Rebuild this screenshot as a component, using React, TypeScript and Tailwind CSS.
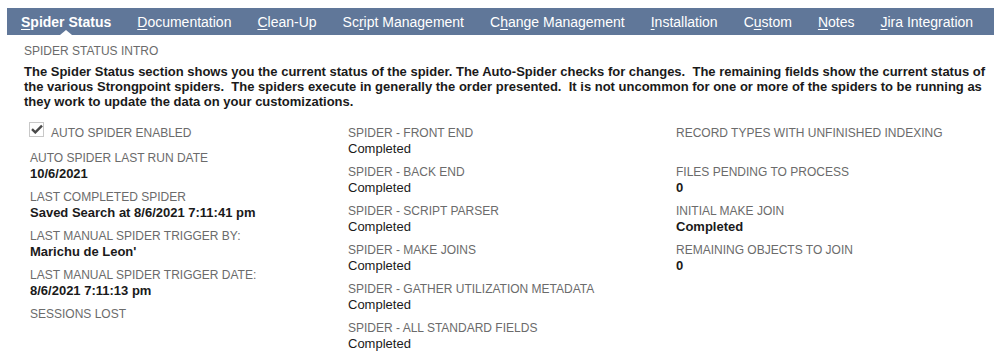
import React from 'react';

type Tab = { pre: string; key: string; post: string; active?: boolean };

const tabs: Tab[] = [
    { pre: '', key: 'S', post: 'pider Status', active: true },
    { pre: '', key: 'D', post: 'ocumentation' },
    { pre: '', key: 'C', post: 'lean-Up' },
    { pre: 'Sc', key: 'r', post: 'ipt Management' },
    { pre: 'C', key: 'h', post: 'ange Management' },
    { pre: '', key: 'I', post: 'nstallation' },
    { pre: 'C', key: 'u', post: 'stom' },
    { pre: '', key: 'N', post: 'otes' },
    { pre: '', key: 'J', post: 'ira Integration' },
];

type Field = { label: string; value?: string; bold?: boolean };

const colOne: Field[] = [
    { label: 'AUTO SPIDER LAST RUN DATE', value: '10/6/2021', bold: true },
    { label: 'LAST COMPLETED SPIDER', value: 'Saved Search at 8/6/2021 7:11:41 pm', bold: true },
    { label: 'LAST MANUAL SPIDER TRIGGER BY:', value: "Marichu de Leon'", bold: true },
    { label: 'LAST MANUAL SPIDER TRIGGER DATE:', value: '8/6/2021 7:11:13 pm', bold: true },
    { label: 'SESSIONS LOST' },
];

const colTwo: Field[] = [
    { label: 'SPIDER - FRONT END', value: 'Completed' },
    { label: 'SPIDER - BACK END', value: 'Completed' },
    { label: 'SPIDER - SCRIPT PARSER', value: 'Completed' },
    { label: 'SPIDER - MAKE JOINS', value: 'Completed' },
    { label: 'SPIDER - GATHER UTILIZATION METADATA', value: 'Completed' },
    { label: 'SPIDER - ALL STANDARD FIELDS', value: 'Completed' },
];

const colThree: Field[] = [
    { label: 'RECORD TYPES WITH UNFINISHED INDEXING', value: '' },
    { label: 'FILES PENDING TO PROCESS', value: '0', bold: true },
    { label: 'INITIAL MAKE JOIN', value: 'Completed', bold: true },
    { label: 'REMAINING OBJECTS TO JOIN', value: '0', bold: true },
];

const FieldBlock: React.FC<{ field: Field }> = ({ field }) => (
    <div className="mb-[7px]">
        <div className="text-[12px] leading-[16px] text-[#6b6b6b]">{field.label}</div>
        {field.value !== undefined && (
            <div
                className={`text-[13px] leading-[16px] h-[16px] text-[#1a1a1a] ${field.bold ? 'font-bold' : ''}`}
            >
                {field.value}
            </div>
        )}
    </div>
);

export default function App() {
    return (
        <div className="w-[994px] h-[361px] bg-white pt-[8px] font-['Liberation_Sans',Arial,sans-serif] overflow-hidden">
            {/* tab bar */}
            <div className="ml-[7px] h-[27px] bg-[#607799] flex items-center pl-[14px] gap-[26px]">
                {tabs.map((t, i) => (
                    <div
                        key={i}
                        className={`relative h-full flex items-center text-[14px] text-white whitespace-nowrap ${t.active ? 'font-bold' : ''}`}
                    >
                        <span className="pt-[1px]">
                            {t.pre}
                            <span className="underline underline-offset-2">{t.key}</span>
                            {t.post}
                        </span>
                        {t.active && (
                            <span className="absolute bottom-0 left-1/2 -translate-x-1/2 w-0 h-0 border-l-[6px] border-r-[6px] border-b-[5px] border-l-transparent border-r-transparent border-b-white" />
                        )}
                    </div>
                ))}
            </div>

            {/* intro */}
            <div className="pl-[24px] pr-[4px] mt-[8px]">
                <div className="text-[12px] leading-[16px] text-[#6b6b6b]">SPIDER STATUS INTRO</div>
                <p className="mt-[5px] text-[13px] leading-[15px] font-bold text-[#1a1a1a]">
                    The Spider Status section shows you the current status of the spider. The Auto-Spider checks for changes.{'\u00a0 '}The remaining fields show the current status of the various Strongpoint spiders.{'\u00a0 '}The spiders execute in generally the order presented.{'\u00a0 '}It is not uncommon for one or more of the spiders to be running as they work to update the data on your customizations.
                </p>
            </div>

            {/* fields */}
            <div className="flex pl-[30px] mt-[16px]">
                <div className="w-[318px]">
                    <div className="h-[25px] flex items-start">
                        <span className="relative -ml-[1px] mt-[-3px] w-[15px] h-[15px] border border-[#c8c8c8] bg-white flex items-center justify-center">
                            <svg width="12" height="10" viewBox="0 0 12 10" className="absolute left-[1px] top-[1px]">
                                <path d="M1 5.2 L4.3 8.4 L11 1.6" fill="none" stroke="#4a4a4a" strokeWidth="2.4" />
                            </svg>
                        </span>
                        <span className="ml-[7px] text-[12px] leading-[16px] text-[#6b6b6b]">AUTO SPIDER ENABLED</span>
                    </div>
                    {colOne.map((f, i) => (
                        <FieldBlock key={i} field={f} />
                    ))}
                </div>
                <div className="w-[328px]">
                    {colTwo.map((f, i) => (
                        <FieldBlock key={i} field={f} />
                    ))}
                </div>
                <div className="flex-1">
                    {colThree.map((f, i) => (
                        <FieldBlock key={i} field={f} />
                    ))}
                </div>
            </div>
        </div>
    );
}
